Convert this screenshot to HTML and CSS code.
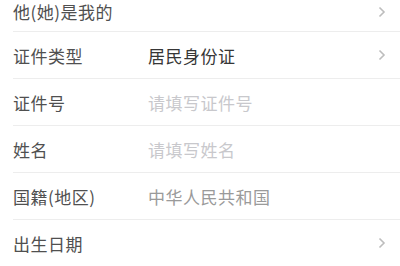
FILE: index.html
```html
<!DOCTYPE html>
<html lang="zh">
<head>
<meta charset="utf-8">
<link rel="stylesheet" href="styles.css">
</head>
<body>
<div class="list">
  <div class="row first">
    <span class="label">他(她)是我的</span>
    <span class="value"></span>
    <svg class="chev" width="8" height="12" viewBox="0 0 8 12"><polyline points="1.5,1.5 6,6 1.5,10.5" fill="none" stroke="#bdbdbd" stroke-width="1.6"/></svg>
  </div>
  <div class="row">
    <span class="label">证件类型</span>
    <span class="value strong">居民身份证</span>
    <svg class="chev" width="8" height="12" viewBox="0 0 8 12"><polyline points="1.5,1.5 6,6 1.5,10.5" fill="none" stroke="#bdbdbd" stroke-width="1.6"/></svg>
  </div>
  <div class="row">
    <span class="label">证件号</span>
    <span class="value placeholder">请填写证件号</span>
  </div>
  <div class="row">
    <span class="label">姓名</span>
    <span class="value placeholder">请填写姓名</span>
  </div>
  <div class="row">
    <span class="label">国籍(地区)</span>
    <span class="value muted">中华人民共和国</span>
  </div>
  <div class="row last">
    <span class="label">出生日期</span>
    <span class="value"></span>
    <svg class="chev" width="8" height="12" viewBox="0 0 8 12"><polyline points="1.5,1.5 6,6 1.5,10.5" fill="none" stroke="#bdbdbd" stroke-width="1.6"/></svg>
  </div>
</div>
</body>
</html>
```
FILE: styles.css
```css
html, body {
  margin: 0;
  padding: 0;
  background: #ffffff;
  overflow: hidden;
}
body {
  font-family: "Noto Sans CJK SC", "Noto Sans", sans-serif;
  font-size: 17px;
}
.list {
  margin-top: -8px;
  margin-left: 13px;
}
.row {
  display: flex;
  align-items: center;
  height: 46px;
  border-bottom: 1px solid #ededed;
  padding-right: 14px;
}
.row.first {
  height: 39px;
}
.row.last {
  border-bottom: none;
}
.label {
  width: 135px;
  flex: none;
  color: #505050;
  letter-spacing: 0.5px;
}
.value {
  flex: 1;
  letter-spacing: 0.5px;
}
.strong {
  color: #363636;
}
.placeholder {
  color: #c8c8cc;
}
.muted {
  color: #9a9a9a;
}
.chev {
  flex: none;
  display: block;
}
```
